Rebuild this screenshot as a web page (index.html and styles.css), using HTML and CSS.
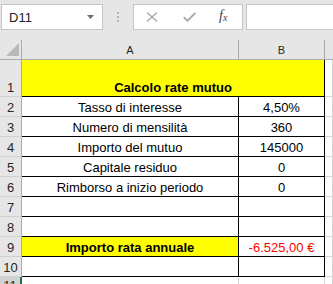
FILE: index.html
```html
<!DOCTYPE html>
<html>
<head>
<meta charset="utf-8">
<link rel="stylesheet" href="styles.css">
</head>
<body>
<div class="toolbar">
  <div class="namebox">
    <span class="nb-text">D11</span>
    <svg class="dd" width="7" height="4" viewBox="0 0 7 4"><path d="M0 0H7L3.5 4Z" fill="#6d6d6d"/></svg>
  </div>
  <div class="sep"><i></i><i></i><i></i></div>
  <div class="fbtns">
    <svg class="ico" width="12" height="10" viewBox="0 0 12 10"><path d="M1 0.5L11 9.5M11 0.5L1 9.5" stroke="#a6a6a6" stroke-width="1.3" fill="none"/></svg>
    <svg class="ico chk" width="13" height="10" viewBox="0 0 13 10"><path d="M0.8 5.2L4.5 8.8L12.3 0.8" stroke="#a6a6a6" stroke-width="1.8" fill="none"/></svg>
    <span class="fx">f<span class="fxx">x</span></span>
  </div>
  <div class="finput"></div>
</div>
<div class="sheet">
  <div class="corner"><svg width="13" height="13" viewBox="0 0 13 13"><path d="M13 0V13H0Z" fill="#b9b9b9"/></svg></div>
  <div class="ch">A</div>
  <div class="ch">B</div>
  <div class="ch last"></div>

  <div class="rh">1</div>
  <div class="cell title">Calcolo rate mutuo</div>
  <div class="cell g"></div>

  <div class="rh">2</div>
  <div class="cell k">Tasso di interesse</div>
  <div class="cell k">4,50%</div>
  <div class="cell g"></div>

  <div class="rh">3</div>
  <div class="cell k">Numero di mensilità</div>
  <div class="cell k">360</div>
  <div class="cell g"></div>

  <div class="rh">4</div>
  <div class="cell k">Importo del mutuo</div>
  <div class="cell k">145000</div>
  <div class="cell g"></div>

  <div class="rh">5</div>
  <div class="cell k">Capitale residuo</div>
  <div class="cell k">0</div>
  <div class="cell g"></div>

  <div class="rh">6</div>
  <div class="cell k">Rimborso a inizio periodo</div>
  <div class="cell k">0</div>
  <div class="cell g"></div>

  <div class="rh">7</div>
  <div class="cell k"></div>
  <div class="cell k"></div>
  <div class="cell g"></div>

  <div class="rh">8</div>
  <div class="cell k"></div>
  <div class="cell k"></div>
  <div class="cell g"></div>

  <div class="rh">9</div>
  <div class="cell k yellow bold">Importo rata annuale</div>
  <div class="cell k red">-6.525,00 €</div>
  <div class="cell g"></div>

  <div class="rh">10</div>
  <div class="cell k"></div>
  <div class="cell k"></div>
  <div class="cell g"></div>

  <div class="rh sel">11</div>
  <div class="cell g"></div>
  <div class="cell g"></div>
  <div class="cell g"></div>
</div>
</body>
</html>
```

FILE: styles.css
```css
* { box-sizing: border-box; }
html, body {
  margin: 0;
  padding: 0;
  background: #ffffff;
  width: 333px;
  height: 284px;
  overflow: hidden;
  font-family: "Liberation Sans", Arial, sans-serif;
}
.toolbar {
  height: 40px;
  background: #e6e6e6;
  display: flex;
  align-items: flex-start;
  padding-top: 4px;
}
.namebox {
  margin-left: 1px;
  width: 102px;
  height: 26px;
  background: #ffffff;
  border: 1px solid #c6c6c6;
  display: flex;
  align-items: center;
  justify-content: space-between;
  padding: 0 8px 0 7px;
  font-size: 13px;
  color: #222;
}
.nb-text { padding-top: 1px; }
.dd { margin-bottom: 1px; }
.sep {
  width: 30px;
  height: 26px;
  display: flex;
  flex-direction: column;
  align-items: center;
  justify-content: center;
  gap: 2px;
}
.sep i {
  display: block;
  width: 2px;
  height: 2px;
  background: #b5b5b5;
}
.fbtns {
  width: 110px;
  height: 26px;
  background: #ffffff;
  border: 1px solid #c6c6c6;
  display: flex;
  align-items: center;
  padding-left: 12px;
}
.ico { display: block; }
.chk { margin-left: 25px; }
.fx {
  margin-left: 23px;
  font-family: "Liberation Serif", "Times New Roman", serif;
  font-style: italic;
  font-size: 14px;
  color: #444;
  line-height: 1;
  margin-top: -2px;
}
.fxx { font-size: 10px; position: relative; top: 1px; }
.finput {
  margin-left: 3px;
  flex: 1;
  height: 26px;
  background: #ffffff;
  border: 1px solid #c6c6c6;
  border-right: none;
}
.sheet {
  display: grid;
  grid-template-columns: 22px 217px 86px 1fr;
  grid-template-rows: 20px 37px repeat(9, 20px) 1fr;
  height: 244px;
}
.corner {
  background: #e6e6e6;
  border-right: 1px solid #ababab;
  border-bottom: 1px solid #ababab;
  display: flex;
  align-items: flex-end;
  justify-content: flex-end;
  padding: 0 2px 3px 0;
}
.corner svg { display: block; }
.ch {
  background: #e6e6e6;
  border-right: 1px solid #ababab;
  border-bottom: 1px solid #ababab;
  display: flex;
  align-items: center;
  justify-content: center;
  font-size: 11px;
  color: #262626;
  padding-top: 1px;
}
.ch.last { border-right: none; }
.rh {
  background: #e6e6e6;
  border-right: 1px solid #ababab;
  border-bottom: 1px solid #d0d0d0;
  display: flex;
  align-items: flex-end;
  justify-content: center;
  font-size: 13px;
  line-height: 15px;
  color: #262626;
  padding-bottom: 1px;
}
.rh.sel {
  background: #d2d2d2;
  border-right: 2px solid #217346;
  border-bottom: none;
  padding-bottom: 0;
  align-items: flex-start;
  padding-top: 1px;
}
.cell {
  display: flex;
  align-items: flex-end;
  justify-content: center;
  font-size: 13px;
  line-height: 15px;
  color: #000;
  padding-bottom: 1px;
  white-space: nowrap;
}
.g {
  border-right: 1px solid #d4d4d4;
  border-bottom: 1px solid #d4d4d4;
}
.k {
  border-right: 1px solid #000;
  border-bottom: 1px solid #000;
}
.title {
  grid-column: 2 / 4;
  background: #ffff00;
  font-weight: bold;
  border-right: 1px solid #000;
  border-bottom: 1px solid #000;
}
.yellow { background: #ffff00; }
.bold { font-weight: bold; }
.red { color: #ff0000; }
```
